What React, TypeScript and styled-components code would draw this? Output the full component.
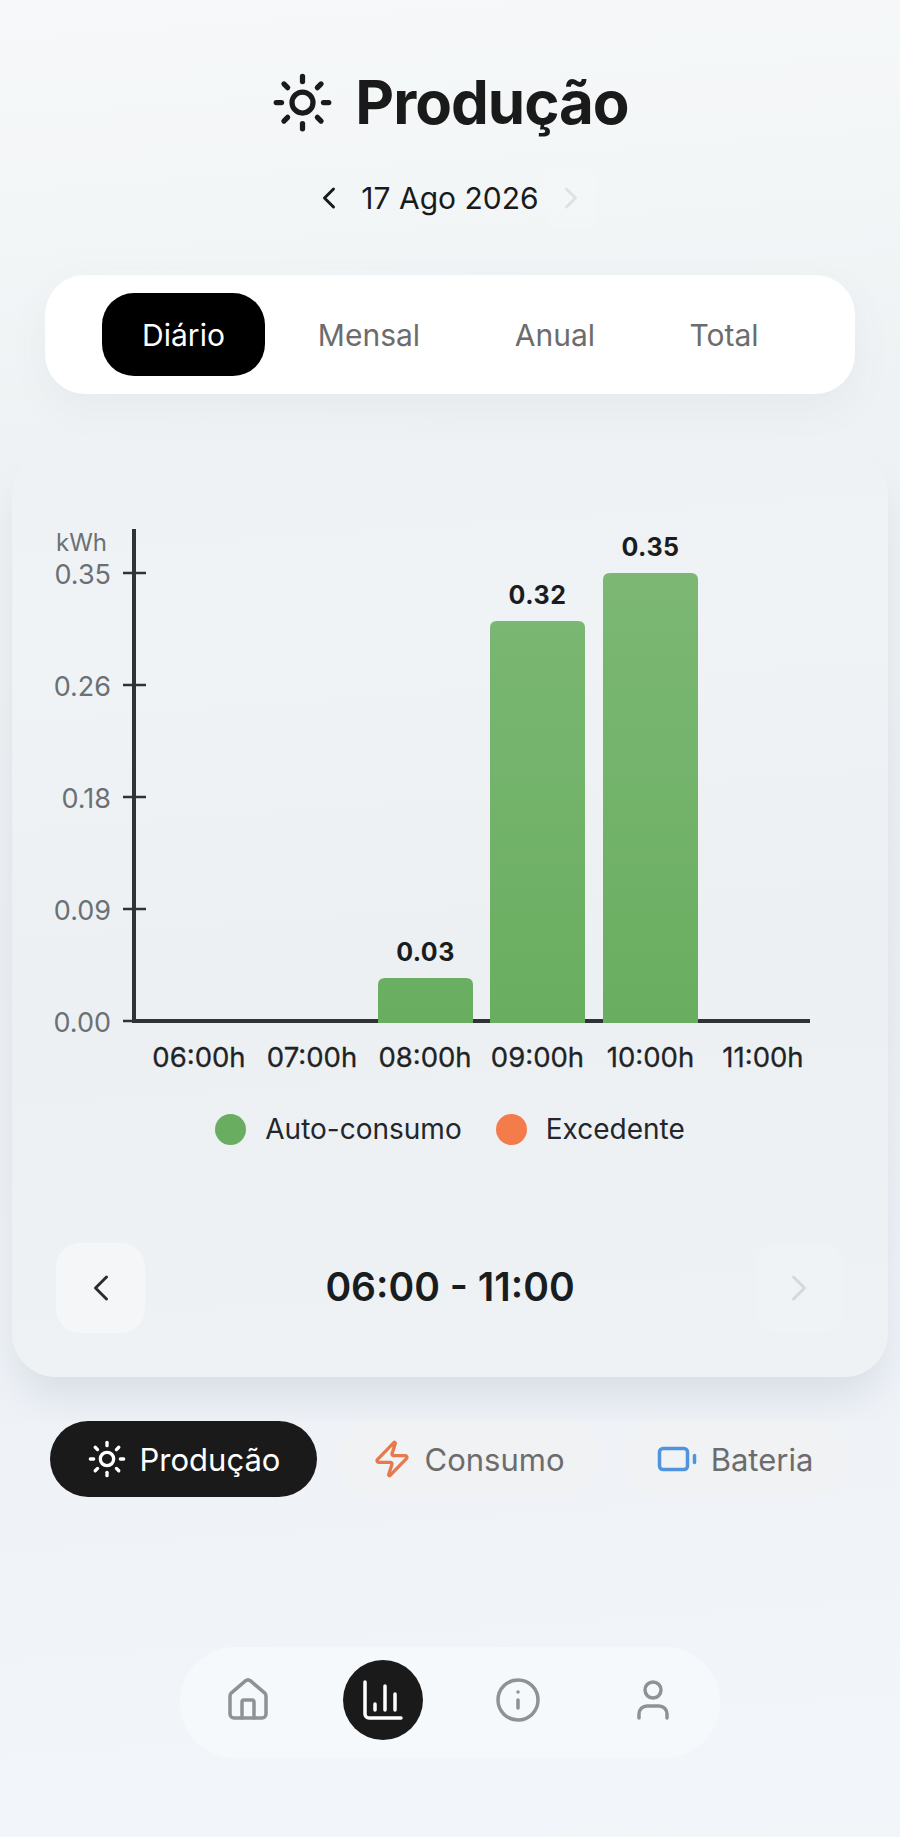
import React from 'react'
import styled, { createGlobalStyle } from 'styled-components'
import { Sun, Zap, Battery, House, ChartColumn, Info, User, ChevronLeft, ChevronRight } from 'lucide-react'

const GlobalStyle = createGlobalStyle`
  html, body {
    margin: 0;
    padding: 0;
    background: #f2f5f9;
    font-family: Inter, "Liberation Sans", sans-serif;
  }
`

const Page = styled.div`
  width: 900px;
  height: 1837px;
  overflow: hidden;
  display: flex;
  flex-direction: column;
  background: linear-gradient(176deg, #f6f8f9 0%, #f3f6f7 12%, #eff2f4 24%, #ecf0f3 50%, #eef2f7 72%, #f0f4f9 85%, #f3f6f9 100%);
`
const Title = styled.h1`
  margin: 60px 0 0;
  height: 84px;
  display: flex;
  align-items: center;
  justify-content: center;
  gap: 21px;
  font-size: 60px;
  font-weight: 700;
  letter-spacing: -1px;
  color: #1a1a1a;
`
const DateRow = styled.div`
  margin-top: 32px;
  height: 44px;
  display: flex;
  align-items: center;
  justify-content: center;
  gap: 14px;
  font-size: 30px;
  color: #1a1a1a;
`
const DateArrow = styled.span<{ $off?: boolean }>`
  display: flex;
  padding: 13px 8px;
  margin: -13px -8px;
  border-radius: 16px;
  color: ${(p) => (p.$off ? '#dfe2e5' : '#1a1a1a')};
  background: ${(p) => (p.$off ? 'rgba(255, 255, 255, 0.1)' : 'transparent')};
`
const Tabs = styled.div`
  margin: 55px 45px 0;
  height: 119px;
  box-sizing: border-box;
  padding: 18px 57px;
  display: flex;
  align-items: center;
  background: #fff;
  border-radius: 40px;
  box-shadow: 0 14px 40px rgba(90, 105, 125, 0.06);
`
const Tab = styled.div<{ $active?: boolean; $w: number }>`
  width: ${(p) => p.$w}px;
  height: 83px;
  flex: none;
  display: flex;
  align-items: center;
  justify-content: center;
  font-size: 30px;
  border-radius: 32px;
  color: ${(p) => (p.$active ? '#fff' : '#6c6c6c')};
  background: ${(p) => (p.$active ? '#000' : 'transparent')};
`
const ChartClip = styled.div`
  height: 1027px;
  padding: 56px 12px 0;
  box-sizing: border-box;
  overflow: hidden;
`
const ChartCard = styled.section`
  height: 927px;
  border-radius: 44px;
  background: linear-gradient(176deg, #eff2f4 0%, #f0f3f5 22%, #ecf0f3 55%, #eef2f5 100%);
  box-shadow: 0 26px 36px -6px rgba(90, 105, 125, 0.14);
  display: flex;
  flex-direction: column;
`
const ChartSvg = styled.svg`
  display: block;
  margin-top: 50px;
  flex: none;
`
const AxisLabel = styled.text<{ $size: number }>`
  font-family: Inter, "Liberation Sans", sans-serif;
  font-size: ${(p) => p.$size}px;
  fill: #6b7075;
`
const HourLabel = styled.text`
  font-family: Inter, "Liberation Sans", sans-serif;
  font-size: 27.5px;
  fill: #1f2326;
  text-anchor: middle;
  stroke: #1f2326;
  stroke-width: 0.3px;
`
const ValueLabel = styled.text`
  font-family: Inter, "Liberation Sans", sans-serif;
  font-size: 25px;
  font-weight: 700;
  fill: #1a1d20;
  text-anchor: middle;
  letter-spacing: 0.5px;
`
const Legend = styled.div`
  margin-top: 9px;
  height: 40px;
  display: flex;
  align-items: center;
  justify-content: center;
  gap: 34px;
`
const LegendItem = styled.div`
  display: flex;
  align-items: center;
  gap: 19px;
  font-size: 28px;
  color: #23262a;
`
const Dot = styled.span<{ $color: string }>`
  width: 31px;
  height: 31px;
  border-radius: 50%;
  background: ${(p) => p.$color};
`
const Pager = styled.div`
  margin-top: auto;
  padding: 0 44px 44px;
  display: flex;
  align-items: center;
  justify-content: space-between;
`
const PagerButton = styled.div<{ $off?: boolean }>`
  width: 89px;
  height: 90px;
  border-radius: 24px;
  display: flex;
  align-items: center;
  justify-content: center;
  background: ${(p) => (p.$off ? '#f0f3f5' : '#f5f6f7')};
  color: ${(p) => (p.$off ? '#d5d8db' : '#2a2d30')};
`
const PagerText = styled.div`
  margin-bottom: 3px;
  font-size: 39px;
  font-weight: 600;
  color: #1a1d20;
`
const Sections = styled.div`
  padding: 0 50px;
  display: flex;
  align-items: center;
  justify-content: space-between;
`
const SectionPill = styled.div<{ $active?: boolean; $w: number }>`
  width: ${(p) => p.$w}px;
  height: 76px;
  box-sizing: border-box;
  padding-right: ${(p) => (p.$active ? 0 : 3)}px;
  border-radius: 38px;
  display: flex;
  align-items: center;
  justify-content: center;
  gap: 13px;
  font-size: 31px;
  color: ${(p) => (p.$active ? '#fff' : '#6c6c6c')};
  background: ${(p) => (p.$active ? '#1a1a1a' : '#f1f2f4')};
`
const Nav = styled.nav`
  margin: 150px auto 0;
  width: 540px;
  height: 111px;
  box-sizing: border-box;
  padding: 0 27px 5px 28px;
  border-radius: 56px;
  background: #f6f9fc;
  display: flex;
  align-items: center;
  justify-content: space-between;
  color: #8f9295;
`
const NavItem = styled.div<{ $active?: boolean }>`
  width: 80px;
  height: 80px;
  border-radius: 50%;
  display: flex;
  align-items: center;
  justify-content: center;
  color: ${(p) => (p.$active ? '#fff' : 'inherit')};
  background: ${(p) => (p.$active ? '#1a1a1a' : 'transparent')};
`

const ticks = [
  { y: 573, label: '0.35' },
  { y: 685, label: '0.26' },
  { y: 797, label: '0.18' },
  { y: 909, label: '0.09' },
  { y: 1021, label: '0.00' },
]
const hours = [
  { x: 199, label: '06:00h' },
  { x: 312, label: '07:00h' },
  { x: 425, label: '08:00h' },
  { x: 537.5, label: '09:00h' },
  { x: 650.5, label: '10:00h' },
  { x: 763, label: '11:00h' },
]
const bars = [
  { x: 378, top: 978, label: '0.03', labelY: 961 },
  { x: 490, top: 621, label: '0.32', labelY: 604 },
  { x: 603, top: 573, label: '0.35', labelY: 556 },
]

const App = () => {
  return (
    <>
      <GlobalStyle />
      <Page>
        <Title>
          <Sun size={63} strokeWidth={2} />
          Produção
        </Title>
        <DateRow>
          <DateArrow><ChevronLeft size={36} /></DateArrow>
          17 Ago 2026
          <DateArrow $off><ChevronRight size={36} /></DateArrow>
        </DateRow>
        <Tabs>
          <Tab $active $w={163}>Diário</Tab>
          <Tab $w={208}>Mensal</Tab>
          <Tab $w={164}>Anual</Tab>
          <Tab $w={174}>Total</Tab>
        </Tabs>
        <ChartClip>
          <ChartCard>
            <ChartSvg width={876} height={600} viewBox="12 500 876 600">
              <defs>
                <linearGradient id="barFill" gradientUnits="userSpaceOnUse" x1="0" y1="573" x2="0" y2="1021">
                  <stop offset="0" stopColor="#7cb874" />
                  <stop offset="1" stopColor="#69ae60" />
                </linearGradient>
              </defs>
              <AxisLabel $size={24} x={56} y={551}>kWh</AxisLabel>
              {ticks.map((t) => (
                <g key={t.label}>
                  <AxisLabel $size={27} x={111} y={t.y + 11} textAnchor="end">{t.label}</AxisLabel>
                  <line x1={123} x2={146} y1={t.y} y2={t.y} stroke="#2f3336" strokeWidth={2.5} />
                </g>
              ))}
              <line x1={134} x2={134} y1={529} y2={1023} stroke="#2f3336" strokeWidth={4} />
              <line x1={132} x2={810} y1={1021} y2={1021} stroke="#2f3336" strokeWidth={4} />
              {bars.map((b) => (
                <g key={b.label}>
                  <path
                    d={`M${b.x} 1023V${b.top + 7}q0 -7 7 -7h81q7 0 7 7V1023z`}
                    fill="url(#barFill)"
                  />
                  <ValueLabel x={b.x + 47.5} y={b.labelY}>{b.label}</ValueLabel>
                </g>
              ))}
              {hours.map((h) => (
                <HourLabel key={h.label} x={h.x} y={1067}>{h.label}</HourLabel>
              ))}
            </ChartSvg>
            <Legend>
              <LegendItem><Dot $color="#69ae60" />Auto-consumo</LegendItem>
              <LegendItem><Dot $color="#f47c4a" />Excedente</LegendItem>
            </Legend>
            <Pager>
              <PagerButton><ChevronLeft size={44} strokeWidth={1.6} /></PagerButton>
              <PagerText>06:00 - 11:00</PagerText>
              <PagerButton $off><ChevronRight size={44} strokeWidth={1.6} /></PagerButton>
            </Pager>
          </ChartCard>
        </ChartClip>
        <Sections>
          <SectionPill $active $w={267}><Sun size={40} strokeWidth={2} />Produção</SectionPill>
          <SectionPill $w={265}><Zap size={40} color="#e57a4e" strokeWidth={2} />Consumo</SectionPill>
          <SectionPill $w={228}><Battery size={42} color="#4f94dc" strokeWidth={2} />Bateria</SectionPill>
        </Sections>
        <Nav>
          <NavItem><House size={48} strokeWidth={1.75} /></NavItem>
          <NavItem $active><ChartColumn size={48} strokeWidth={1.75} /></NavItem>
          <NavItem><Info size={48} strokeWidth={1.75} /></NavItem>
          <NavItem><User size={48} strokeWidth={1.75} /></NavItem>
        </Nav>
      </Page>
    </>
  )
}

export default App
